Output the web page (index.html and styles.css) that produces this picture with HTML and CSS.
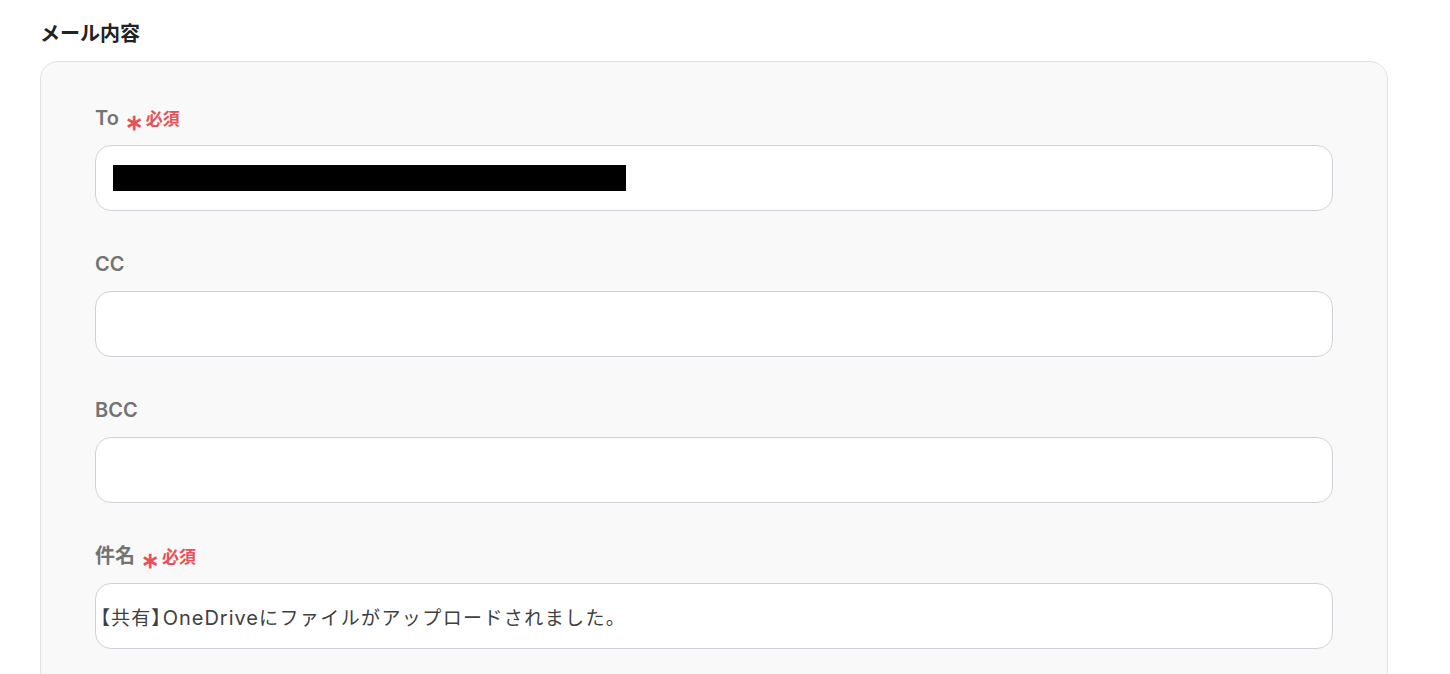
FILE: index.html
```html
<!DOCTYPE html>
<html lang="ja">
<head>
<meta charset="utf-8">
<link rel="stylesheet" href="styles.css">
</head>
<body>
<div class="page">
  <h2 class="title">メール内容</h2>
  <div class="card">
    <div class="field">
      <div class="label">To <span class="req"><span class="ast">∗</span>必須</span></div>
      <div class="input"><span class="redact"></span></div>
    </div>
    <div class="field">
      <div class="label">CC</div>
      <div class="input"></div>
    </div>
    <div class="field">
      <div class="label">BCC</div>
      <div class="input"></div>
    </div>
    <div class="field">
      <div class="label">件名 <span class="req"><span class="ast">∗</span>必須</span></div>
      <div class="input"><span class="value"><span class="br">【</span>共有<span class="br">】</span><span class="latin">OneDrive</span>にファイルがアップロードされました。</span></div>
    </div>
  </div>
</div>
</body>
</html>
```
FILE: styles.css
```css
html, body {
  margin: 0;
  padding: 0;
  background: #ffffff;
  font-family: "Inter", "Noto Sans CJK JP", sans-serif;
}
.page {
  padding: 18px 0 0 40px;
  height: 656px;
  overflow: hidden;
}
.title {
  margin: 0 0 13px 0;
  font-size: 20px;
  line-height: 30px;
  font-weight: 700;
  color: #222222;
  font-family: "Noto Sans CJK JP", sans-serif;
}
.card {
  width: 1348px;
  box-sizing: border-box;
  background: #f9f9f9;
  border: 1px solid #e2e2e2;
  border-radius: 18px;
  padding: 42px 54px 40px 54px;
  display: flex;
  flex-direction: column;
  gap: 39px;
}
.field {
  display: flex;
  flex-direction: column;
  gap: 13px;
}
.label {
  font-size: 20px;
  line-height: 28px;
  font-weight: 600;
  color: #737373;
  display: flex;
  align-items: center;
  gap: 6px;
}
.req {
  color: #e5525a;
  font-size: 17px;
  font-weight: 600;
  display: flex;
  align-items: center;
  font-family: "Noto Sans CJK JP", sans-serif;
}
.ast {
  font-size: 22px;
  margin-right: 3px;
  position: relative;
  top: 2px;
}
.input {
  height: 66px;
  box-sizing: border-box;
  background: #ffffff;
  border: 1px solid #cfd3d9;
  border-radius: 16px;
  padding: 0 17px 0 4px;
  display: flex;
  align-items: center;
}
.redact {
  display: block;
  width: 513px;
  height: 26px;
  background: #000000;
  margin-left: 13px;
}
.value {
  font-size: 19px;
  color: #404040;
  letter-spacing: 1.4px;
  font-family: "Noto Sans CJK JP", sans-serif;
}
.br {
  font-feature-settings: "palt";
}
.latin {
  font-family: "Inter", sans-serif;
  font-size: 20px;
  letter-spacing: 1px;
}
```
